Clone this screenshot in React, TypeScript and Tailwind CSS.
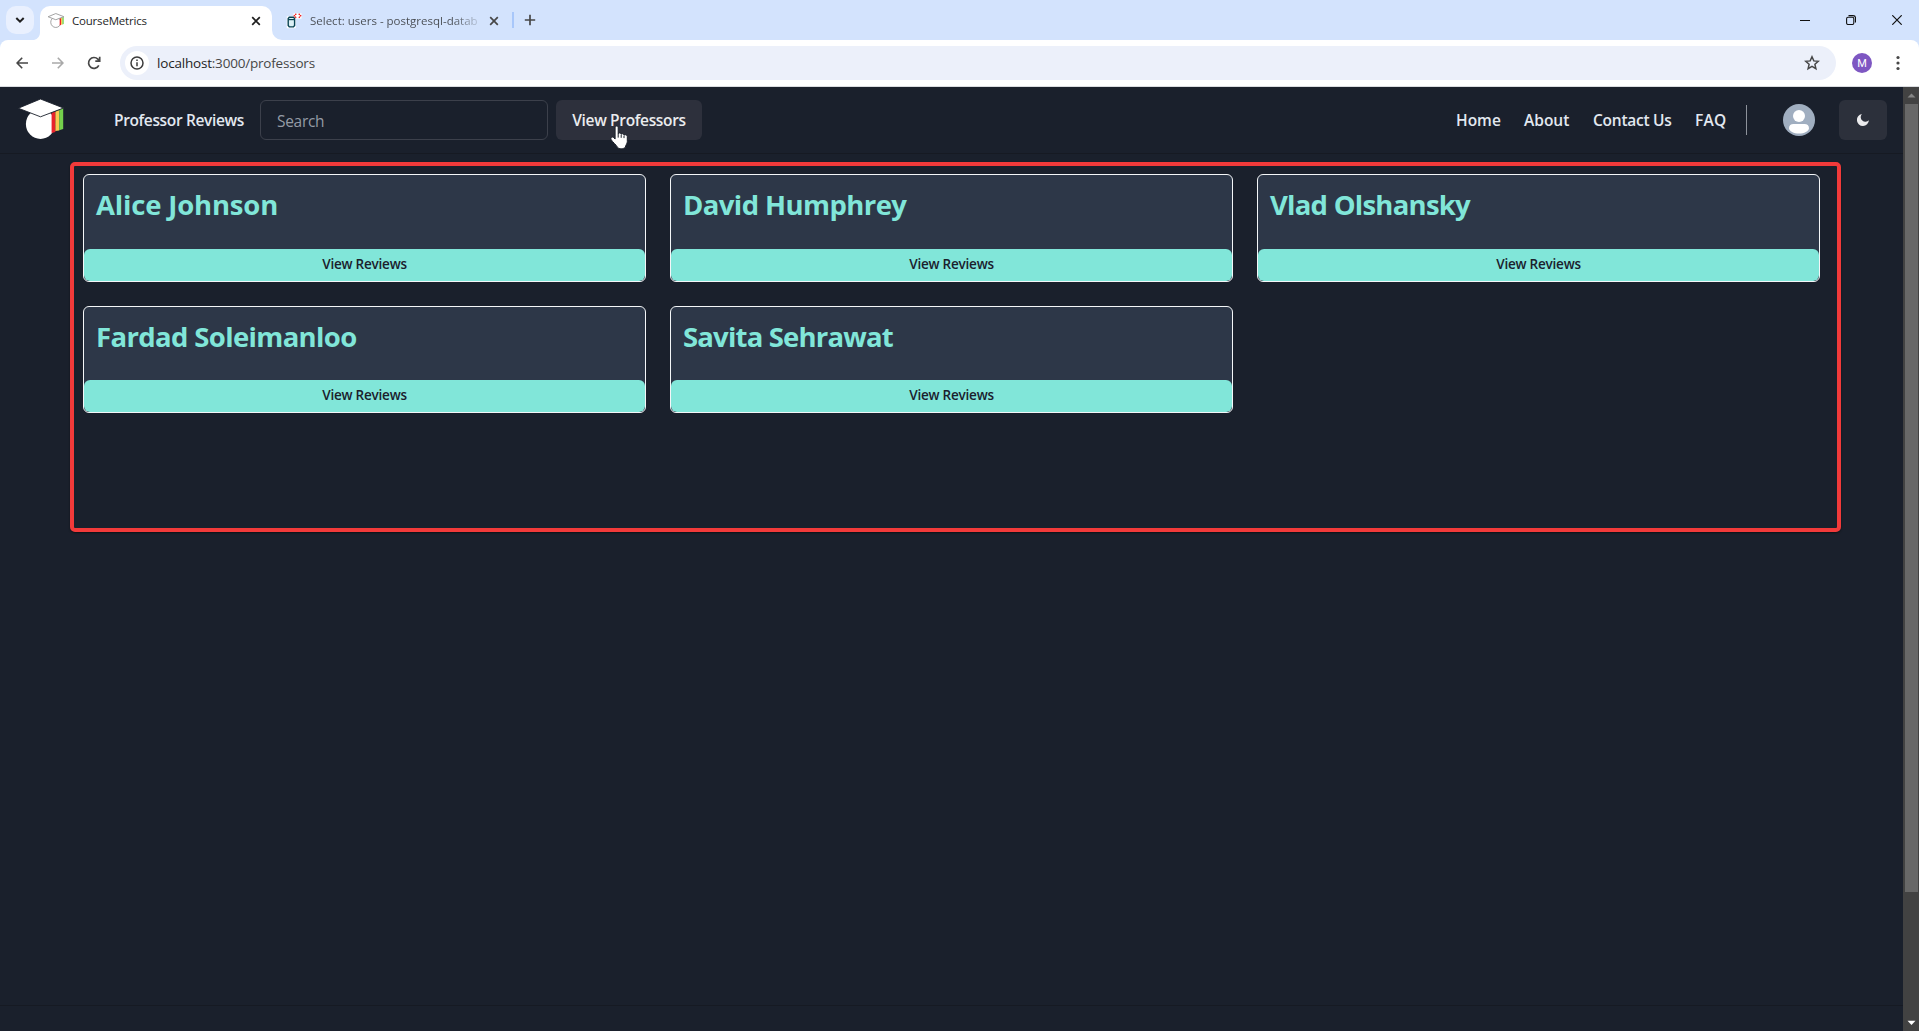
import type { ReactNode } from "react";

type Professor = { name: string; tracking: string };

const professors: Professor[] = [
  { name: "Alice Johnson", tracking: "tracking-[-0.17px]" },
  { name: "David Humphrey", tracking: "tracking-[-0.58px]" },
  { name: "Vlad Olshansky", tracking: "tracking-[-0.75px]" },
  { name: "Fardad Soleimanloo", tracking: "tracking-[-0.64px]" },
  { name: "Savita Sehrawat", tracking: "tracking-[-0.82px]" },
];

function CapLogo({ className, outlined = false }: { className: string; outlined?: boolean }) {
  const line = outlined ? "#9a9a9a" : "#1b202b";
  const width = outlined ? 2.6 : 0.9;
  return (
    <svg viewBox="0 0 46 42" className={className}>
      <ellipse cx="22.5" cy="26" rx="14.6" ry="15" fill="#fff" stroke={outlined ? line : "none"} strokeWidth={width} />
      <path d="M33.6 14.5 37.4 13.5V34l-3.8 1Z" fill="#e8222b" />
      <path d="M37.4 13.5 41.2 12V32.5l-3.8.6Z" fill="#f9c851" />
      <path d="M41.2 12 45.2 9.5V31l-4 1.2Z" fill="#74d04c" />
      <path d="M.3 10.2 22.5 1 45.5 10 22.5 18.8Z" fill="#fff" stroke={line} strokeWidth={width} />
    </svg>
  );
}

function CloseIcon({ className }: { className: string }) {
  return (
    <svg viewBox="0 0 10 10" className={className} stroke="currentColor" strokeWidth="1.7" fill="none">
      <path d="M1.2 1.2 8.8 8.8M8.8 1.2 1.2 8.8" />
    </svg>
  );
}

function TabStrip() {
  return (
    <div className="flex h-10 shrink-0 bg-[#d3e3fd] pl-1.5">
      <button className="mt-1.5 flex size-7 items-center justify-center rounded-[10px] bg-[#e9f0fe]">
        <svg viewBox="0 0 10 8" className="h-2 w-2.5" fill="none" stroke="#1f1f1f" strokeWidth="2">
          <path d="m1.3 2 3.7 3.7L8.7 2" />
        </svg>
      </button>
      <svg viewBox="0 0 6 10" className="h-2.5 w-1.5 self-end" fill="#fff">
        <path d="M6 2A8 8 0 0 1 0 10H6Z" />
      </svg>
      <div className="mt-1.5 flex h-[34px] w-[232px] items-center rounded-t-[10px] bg-white pb-[5px] pl-2 pr-[11px]">
        <CapLogo outlined className="h-[15px] w-4" />
        <span className="ml-2 flex-1 whitespace-nowrap text-[11.5px] tracking-[-0.2px] text-[#1f1f1f]">CourseMetrics</span>
        <CloseIcon className="size-2.5 text-[#1f1f1f]" />
      </div>
      <svg viewBox="0 0 10 10" className="size-2.5 self-end" fill="#fff">
        <path d="M0 0A10 10 0 0 0 10 10H0Z" />
      </svg>
      <div className="mt-1.5 flex h-[34px] w-[217px] items-center pb-[5px] pl-1">
        <svg viewBox="0 0 16 16" className="size-4 shrink-0">
          <path d="M2 4.5h6.5V14H2Z" fill="#fff" stroke="#fff" strokeWidth="2.5" />
          <path d="M7.5 .3h8v5.4h-8Z" fill="#fff" />
          <path d="M2.2 5.5 3.3 4.2h4.2l1.1 1.3v7L7.5 13.9H3.3l-1.1-1.4Z" fill="#dcf0f5" stroke="#084353" strokeWidth="1.4" />
          <path d="M2.2 6.6h6.4" stroke="#084353" strokeWidth="1.2" />
          <path d="m10.3 .8-2 2 2 2M12.7 .8l2 2-2 2" fill="none" stroke="#f01414" strokeWidth="1.3" strokeDasharray="1.5 .5" />
        </svg>
        <span className="ml-2 w-[168px] shrink-0 whitespace-nowrap bg-gradient-to-r from-[#474b51] from-85% to-[#474b51]/20 bg-clip-text text-[11.5px] text-transparent">
          Select: users - postgresql-datab
        </span>
        <CloseIcon className="ml-[11px] size-2.5 shrink-0 text-[#474747]" />
      </div>
      <div className="ml-[13px] mt-3 h-4 w-0.5 bg-[#a8c7fa]" />
      <svg viewBox="0 0 12 12" className="ml-[10px] mt-[14px] size-3" stroke="#474747" strokeWidth="1.7">
        <path d="M6 .8v10.4M.8 6h10.4" />
      </svg>
      <div className="ml-auto flex items-center gap-9 pr-[17px] text-[#111]">
        <svg viewBox="0 0 10 10" className="size-2.5" stroke="currentColor" strokeWidth="1">
          <path d="M0 5.5h10" />
        </svg>
        <svg viewBox="0 0 10 10" className="size-2.5" fill="none" stroke="currentColor" strokeWidth="1.1">
          <rect x=".6" y="2.3" width="7.2" height="7.2" rx="1.4" />
          <path d="M2.5 .6h4.6a2.4 2.4 0 0 1 2.4 2.4v4.6" />
        </svg>
        <svg viewBox="0 0 10 10" className="size-2.5" stroke="currentColor" strokeWidth="1.2">
          <path d="m.3.3 9.4 9.4M9.7.3.3 9.7" />
        </svg>
      </div>
    </div>
  );
}

function Toolbar() {
  return (
    <div className="h-[47px] shrink-0 bg-[#d3e3fd]">
      <div className="flex h-full items-center rounded-t-lg border-b border-[#dadce0] bg-white pl-4 pr-[19px]">
        <svg viewBox="0 0 12 12" className="size-3" fill="none" stroke="#474747" strokeWidth="1.6">
          <path d="M12 6H1.2M6.2.8 1.1 6l5.1 5.2" />
        </svg>
        <svg viewBox="0 0 12 12" className="ml-6 size-3" fill="none" stroke="#a9a9a9" strokeWidth="1.6">
          <path d="M0 6h10.8M5.8.8 10.9 6l-5.1 5.2" />
        </svg>
        <svg viewBox="0 0 14 14" className="ml-[23px] size-3.5" fill="none" stroke="#474747" strokeWidth="1.7">
          <path d="M11.8 9.3A5.4 5.4 0 1 1 10.9 3.2L12.6 5M12.7.7V5.1H8.3" />
        </svg>
        <div className="ml-[19px] flex h-[34px] flex-1 items-center rounded-full bg-[#ecf0fa] pl-[5px] pr-4">
          <span className="flex size-6 items-center justify-center rounded-full bg-white">
            <svg viewBox="0 0 14 14" className="size-3.5" fill="none" stroke="#3c3c3c" strokeWidth="1.5">
              <circle cx="7" cy="7" r="6" />
              <path d="M7 6.2v4M7 3.5v1.5" />
            </svg>
          </span>
          <span className="ml-2 whitespace-nowrap text-[13.5px] tracking-[-0.2px] text-[#474747]">
            <span className="text-[#1f1f1f]">localhost</span>:3000/professors
          </span>
          <svg viewBox="0 0 16 16" className="ml-auto size-4" fill="none" stroke="#474747" strokeWidth="1.5">
            <path d="m8 1.8 1.8 4.1 4.5.4-3.4 3 1 4.4L8 11.4l-3.9 2.3 1-4.4-3.4-3 4.5-.4Z" />
          </svg>
        </div>
        <span className="ml-4 flex size-5 items-center justify-center rounded-full bg-[#7e57c2] font-['Roboto'] text-[11px] leading-none text-white">M</span>
        <svg viewBox="0 0 4 16" className="ml-6 h-4 w-1" fill="#474747">
          <circle cx="2" cy="2.5" r="1.6" />
          <circle cx="2" cy="8" r="1.6" />
          <circle cx="2" cy="13.5" r="1.6" />
        </svg>
      </div>
    </div>
  );
}

function HandPointer() {
  return (
    <svg viewBox="0 0 19 25" className="absolute left-[54px] top-[25px] h-[25px] w-[19px]">
      <path
        d="M5.1 2.8c0-2.3 3.1-2.3 3.1 0v6c.3-1.3 2.8-1.2 3 .5.5-1 2.7-.8 2.8.9.6-1 3.3-.6 3.3 1.4v5.2c0 1.8-1.7 3.2-2 5.4-2.1 2.1-6.1 2.2-7.900 0C6.500 20 2.300 16.800 1.200 14.700c-1.100-2 .9-3.400 2.300-2.200l1.600 1.500Z"
        fill="#fff"
        stroke="#1b202b"
        strokeWidth="1"
      />
      <path d="M8.2 8.8v3.8M11.2 9.8v3M14 10.7v2.4" stroke="#1b202b" strokeWidth="1" />
    </svg>
  );
}

function NavLink({ children, className }: { children: ReactNode; className: string }) {
  return <a className={`whitespace-nowrap pt-px text-[15.5px] font-semibold leading-6 text-[#e2e8f0] ${className}`}>{children}</a>;
}

function Navbar() {
  return (
    <header className="flex h-[67px] shrink-0 items-center border-b border-[#161a23] pb-px pl-[18px] pr-4">
      <CapLogo className="mb-0.5 h-[42px] w-[46px]" />
      <NavLink className="ml-[50px] w-[146px] tracking-[-0.36px]">Professor Reviews</NavLink>
      <div className="flex h-10 w-72 items-center rounded-md border border-[#3c404b] px-4 pt-1 text-[15.5px] tracking-[-0.3px] text-[#949ba5]">Search</div>
      <button className="relative ml-2 flex h-10 w-[146px] items-center justify-center whitespace-nowrap rounded-md bg-[#2d303c] pt-0.5 text-[15.5px] font-semibold tracking-[-0.34px] text-[#ebecee]">
        View Professors
        <HandPointer />
      </button>
      <nav className="ml-auto flex items-center">
        <NavLink className="w-[68px]">Home</NavLink>
        <NavLink className="w-[69px]">About</NavLink>
        <NavLink className="w-[102px] tracking-[-0.25px]">Contact Us</NavLink>
        <NavLink className="w-[51px] tracking-[0.3px]">FAQ</NavLink>
      </nav>
      <div className="h-[30px] w-px bg-[#8d929b]" />
      <svg viewBox="0 0 32 32" className="ml-9 size-8">
        <circle cx="16" cy="16" r="16" fill="#a0aec0" />
        <circle cx="16" cy="12" r="6" fill="#fff" />
        <path d="M10.5 20h11a4.5 4.5 0 0 1 4.5 4.2c0 3-5 5.3-10 5.3S6 27.2 6 24.2A4.5 4.5 0 0 1 10.5 20Z" fill="#fff" />
      </svg>
      <button className="ml-6 flex h-10 w-12 items-center justify-center rounded-md bg-[#2c303b]">
        <svg viewBox="0 0 12 12" className="size-3" fill="#ebebed">
          <path d="M4.9 0A4.6 4.6 0 0 0 11.9 6.2 6 6 0 1 1 4.9 0Z" />
        </svg>
      </button>
    </header>
  );
}

function ProfessorCard({ name, tracking }: Professor) {
  return (
    <article className="flex flex-col overflow-hidden rounded-md border border-[#f4f6f8] bg-[#2d3748]">
      <h2 className={`flex-1 whitespace-nowrap px-3 pt-3 text-[27.5px] font-bold leading-9 text-[#81e6d9] ${tracking}`}>{name}</h2>
      <button className="h-8 shrink-0 rounded-md bg-[#81e6d9] pb-px text-[13.5px] font-semibold tracking-[-0.22px] text-[#1a202c]">View Reviews</button>
    </article>
  );
}

function Scrollbar() {
  return (
    <div className="flex w-4 shrink-0 flex-col items-center bg-[#424242]">
      <svg viewBox="0 0 16 17" className="h-[17px] w-4 shrink-0" fill="#858585">
        <path d="m8.5 6.5 4 4h-8Z" />
      </svg>
      <div className="ml-0.5 h-[788px] w-[13px] self-start bg-[#686868]" />
      <svg viewBox="0 0 16 17" className="mt-auto h-[17px] w-4 shrink-0" fill="#fff">
        <path d="m8.5 11 4-4.3h-8Z" />
      </svg>
    </div>
  );
}

export default function App() {
  return (
    <div className="flex h-screen flex-col overflow-hidden bg-[#1a202c] font-['Open_Sans','Noto_Sans',sans-serif]">
      <TabStrip />
      <Toolbar />
      <div className="flex min-h-0 flex-1">
        <div className="flex min-w-0 flex-1 flex-col">
          <Navbar />
          <main className="flex-1 pl-[70px] pr-[62px] pt-2">
            <section className="h-[370px] rounded-[5px] border-4 border-[#f23a3a] pl-[9px] pr-[17px] pt-2 shadow-[0_1px_2px_rgba(0,0,0,0.5)]">
              <div className="grid grid-cols-3 grid-rows-[108px_107px] gap-6">
                {professors.map((p) => (
                  <ProfessorCard key={p.name} {...p} />
                ))}
              </div>
            </section>
          </main>
          <footer className="h-[26px] shrink-0 border-t border-[#161a23]" />
        </div>
        <Scrollbar />
      </div>
    </div>
  );
}
